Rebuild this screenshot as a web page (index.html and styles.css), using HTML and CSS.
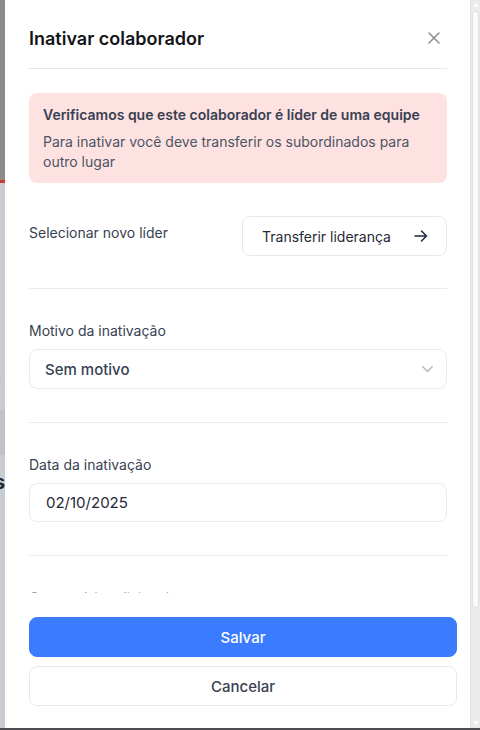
FILE: index.html
```html
<!DOCTYPE html>
<html lang="pt-BR">
<head>
<meta charset="utf-8">
<title>Inativar colaborador</title>
<link rel="stylesheet" href="styles.css">
</head>
<body>
<div class="screen">
  <div class="backdrop">
    <span class="bg-frag frag-a">s</span>
    <span class="bg-frag frag-b">s</span>
  </div>
  <div class="drawer">
    <div class="drawer-main">
      <div class="header">
        <h1 class="title">Inativar colaborador</h1>
        <button class="close" aria-label="Fechar">
          <svg width="12" height="12" viewBox="0 0 12 12"><path d="M1 1L11 11M11 1L1 11" stroke="#8a8d92" stroke-width="1.5" stroke-linecap="round"/></svg>
        </button>
      </div>
      <div class="content">
        <div class="alert">
          <div class="alert-title">Verificamos que este colaborador é líder de uma equipe</div>
          <div class="alert-text">Para inativar você deve transferir os subordinados para outro lugar</div>
        </div>
        <div class="section section-first">
          <div class="leader-row">
            <span class="label label-inline">Selecionar novo líder</span>
            <button class="transfer">
              <span>Transferir liderança</span>
              <svg width="14" height="12" viewBox="0 0 14 12"><path d="M1 6H12.5M7.5 1L12.5 6L7.5 11" fill="none" stroke="#1f2937" stroke-width="1.5" stroke-linecap="round" stroke-linejoin="round"/></svg>
            </button>
          </div>
        </div>
        <div class="section">
          <div class="label">Motivo da inativação</div>
          <div class="field select">
            <span>Sem motivo</span>
            <svg width="11" height="7" viewBox="0 0 11 7"><path d="M0.75 0.75L5.5 5.5L10.25 0.75" fill="none" stroke="#aeb2b8" stroke-width="1.2" stroke-linecap="round" stroke-linejoin="round"/></svg>
          </div>
        </div>
        <div class="section">
          <div class="label">Data da inativação</div>
          <div class="field date">02/10/2025</div>
        </div>
        <div class="section section-last">
          <div class="label label-faint">Comentário adicional</div>
          <div class="field textarea"></div>
        </div>
      </div>
      <div class="footer">
        <button class="btn btn-primary">Salvar</button>
        <button class="btn btn-secondary">Cancelar</button>
      </div>
    </div>
    <div class="scrollbar">
      <div class="sb-arrow sb-up"></div>
      <div class="sb-thumb"></div>
      <div class="sb-space"></div>
      <div class="sb-arrow sb-down"></div>
    </div>
  </div>
</div>
</body>
</html>
```
FILE: styles.css
```css
html, body {
  margin: 0;
  padding: 0;
  background: #fff;
}
body {
  font-family: Inter, "Noto Sans", "Liberation Sans", sans-serif;
  color: #374151;
}
.screen {
  display: flex;
  height: 728px;
  border-bottom: 2px solid #4d4d4f;
  overflow: hidden;
}
.backdrop {
  width: 5px;
  flex: none;
  position: relative;
  overflow: hidden;
  background: linear-gradient(to bottom, #8b8b8b 0, #8b8b8b 180px, #cf3b3b 180px, #cf3b3b 183px, #c8cbcf 183px, #c8cbcf 410px, #bfc3c7 410px, #bfc3c7 455px, #c8cbcf 455px);
}
.bg-frag {
  position: absolute;
  left: -6px;
  font-weight: 700;
  line-height: 1;
}
.frag-a {
  top: 373px;
  font-size: 12px;
  color: #8b9097;
  font-weight: 400;
}
.frag-b {
  top: 472px;
  font-size: 20px;
  color: #1f2937;
}
.drawer {
  flex: 1;
  display: flex;
  background: #fff;
  min-width: 0;
}
.drawer-main {
  flex: 1;
  display: flex;
  flex-direction: column;
  min-width: 0;
}
.header {
  margin: 0 23px 0 24px;
  padding: 25px 0 15px;
  border-bottom: 1px solid #e5e7eb;
  display: flex;
  justify-content: space-between;
  align-items: center;
}
.title {
  margin: 0;
  font-size: 18px;
  line-height: 28px;
  font-weight: 600;
  color: #111318;
}
.close {
  border: 0;
  background: none;
  padding: 0;
  margin: 0 7px 3px 0;
  width: 12px;
  height: 12px;
  display: flex;
}
.content {
  flex: 1;
  overflow: hidden;
  padding: 0 23px 0 24px;
}
.alert {
  margin-top: 24px;
  background: #fee2e2;
  border-radius: 8px;
  padding: 12px 14px 11px;
  font-size: 14px;
  line-height: 20px;
}
.alert-title {
  font-weight: 600;
  color: #374151;
  margin-bottom: 7px;
}
.alert-text {
  color: #4b5563;
}
.section {
  padding: 32px 0 33px;
  border-bottom: 1px solid #e9eaec;
}
.section-first {
  padding: 33px 0 32px;
}
.section-last {
  padding-top: 32px;
  border-bottom: 0;
}
.leader-row {
  display: flex;
  justify-content: space-between;
  align-items: flex-start;
}
.label {
  font-size: 14px;
  line-height: 20px;
  color: #374151;
  margin-bottom: 8px;
}
.label-faint {
  color: #9aa0a8;
}
.label-inline {
  padding-top: 7px;
  margin-bottom: 0;
}
.transfer {
  width: 205px;
  height: 40px;
  box-sizing: border-box;
  border: 1px solid #e6e8eb;
  border-radius: 8px;
  background: #fff;
  padding: 0 18px 0 19px;
  display: flex;
  align-items: center;
  justify-content: space-between;
  font-family: inherit;
  font-size: 14px;
  color: #1f2937;
}
.field {
  box-sizing: border-box;
  height: 40px;
  border: 1px solid #e8eaed;
  border-radius: 8px;
  display: flex;
  align-items: center;
  font-size: 15px;
  color: #1f2937;
}
.select {
  justify-content: space-between;
  padding: 0 13px 0 15px;
  font-weight: 500;
  color: #374151;
}
.date {
  height: 39px;
  padding: 0 16px;
}
.textarea {
  height: 80px;
}
.footer {
  padding: 24px 13px 22px 24px;
  display: flex;
  flex-direction: column;
  gap: 9px;
}
.btn {
  height: 40px;
  box-sizing: border-box;
  border-radius: 8px;
  font-family: inherit;
  font-size: 15px;
  font-weight: 500;
  width: 100%;
}
.btn-primary {
  background: #3a7cfd;
  border: 1px solid #3a7cfd;
  color: #fff;
}
.btn-secondary {
  background: #fff;
  border: 1px solid #e6e8eb;
  color: #374151;
}
.scrollbar {
  width: 9px;
  flex: none;
  background: #ebebee;
  border-left: 1px solid #e3e3e6;
  display: flex;
  flex-direction: column;
  align-items: center;
}
.sb-arrow {
  width: 0;
  height: 0;
  border-left: 3px solid transparent;
  border-right: 3px solid transparent;
  margin: 3px 0;
}
.sb-up {
  border-bottom: 4px solid #fdfdfd;
}
.sb-down {
  border-top: 4px solid #fdfdfd;
}
.sb-thumb {
  width: 5px;
  height: 595px;
  margin-top: 1px;
  background: #fbfbfc;
  border: 1px solid #e0e0e3;
  border-radius: 3px;
}
.sb-space {
  flex: 1;
}
```
